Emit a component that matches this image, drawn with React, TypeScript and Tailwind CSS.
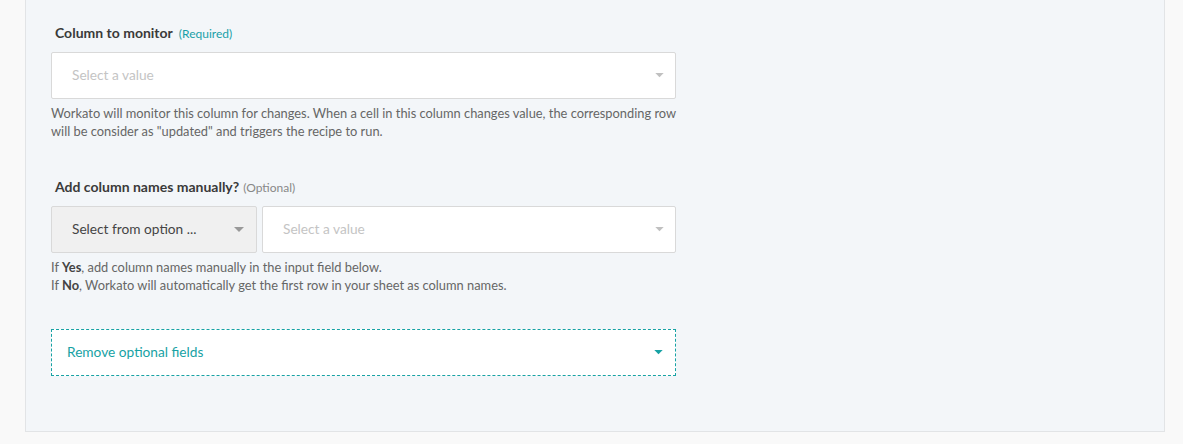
const Caret = ({ className }: { className: string }) => (
  <svg width="10" height="6" viewBox="0 0 10 6" className={className}>
    <path d="M0 0h10L5 5z" fill="currentColor" />
  </svg>
);

const App = () => {
  return (
    <div className="h-[444px] w-full bg-[#f9f9f9] font-['Lato','Open_Sans',sans-serif] pl-[25px] pr-[18px]">
      <div className="h-[432px] bg-[#f3f6f9] border-l border-r border-b border-[#e2e4e6] pl-[25px] pt-[24px]">
        <div className="w-[625px]">
          <div className="flex items-baseline gap-[6px] pl-[4px] text-[#3a3a3a] leading-[18px]">
            <span className="text-[14px] font-bold">Column to monitor</span>
            <span className="text-[12px] text-[#1aa0a8]">(Required)</span>
          </div>
          <div className="mt-[9px] h-[47px] bg-white border border-[#d9d9d9] rounded-[2px] flex items-center justify-between pl-[20px] pr-[11px]">
            <span className="text-[13.7px] text-[#c4c4c4]">Select a value</span>
            <Caret className="text-[#c0c0c0] w-[9px] h-[5px]" />
          </div>
          <p className="mt-[5px] text-[12.85px] leading-[18px] text-[#666]">
            Workato will monitor this column for changes. When a cell in this column changes value, the corresponding row will be consider as "updated" and triggers the recipe to run.
          </p>

          <div className="mt-[38px] flex items-baseline gap-[4px] pl-[4px] text-[#3a3a3a] leading-[18px]">
            <span className="text-[14px] font-bold">Add column names manually?</span>
            <span className="text-[12px] text-[#888]">(Optional)</span>
          </div>
          <div className="mt-[9px] flex gap-[5px] h-[47px]">
            <div className="w-[206px] bg-[#f0f0f0] border border-[#d9d9d9] rounded-[2px] flex items-center justify-between pl-[20px] pr-[12px]">
              <span className="text-[13.7px] text-[#444]">Select from option ...</span>
              <Caret className="text-[#999] w-[10px] h-[6px]" />
            </div>
            <div className="flex-1 bg-white border border-[#d9d9d9] rounded-[2px] flex items-center justify-between pl-[20px] pr-[11px]">
              <span className="text-[13.7px] text-[#c4c4c4]">Select a value</span>
              <Caret className="text-[#c0c0c0] w-[9px] h-[5px]" />
            </div>
          </div>
          <p className="mt-[5px] text-[12.85px] leading-[18px] text-[#666]">
            If <span className="font-bold text-[#444]">Yes</span>, add column names manually in the input field below.
            <br />
            If <span className="font-bold text-[#444]">No</span>, Workato will automatically get the first row in your sheet as column names.
          </p>

          <div className="mt-[35px] h-[47px] bg-white border border-dashed border-[#17a2a4] flex items-center justify-between pl-[15px] pr-[12px]">
            <span className="text-[13.7px] text-[#17a2a4]">Remove optional fields</span>
            <Caret className="text-[#17a2a4] w-[9px] h-[5px]" />
          </div>
        </div>
      </div>
    </div>
  );
};

export default App;
